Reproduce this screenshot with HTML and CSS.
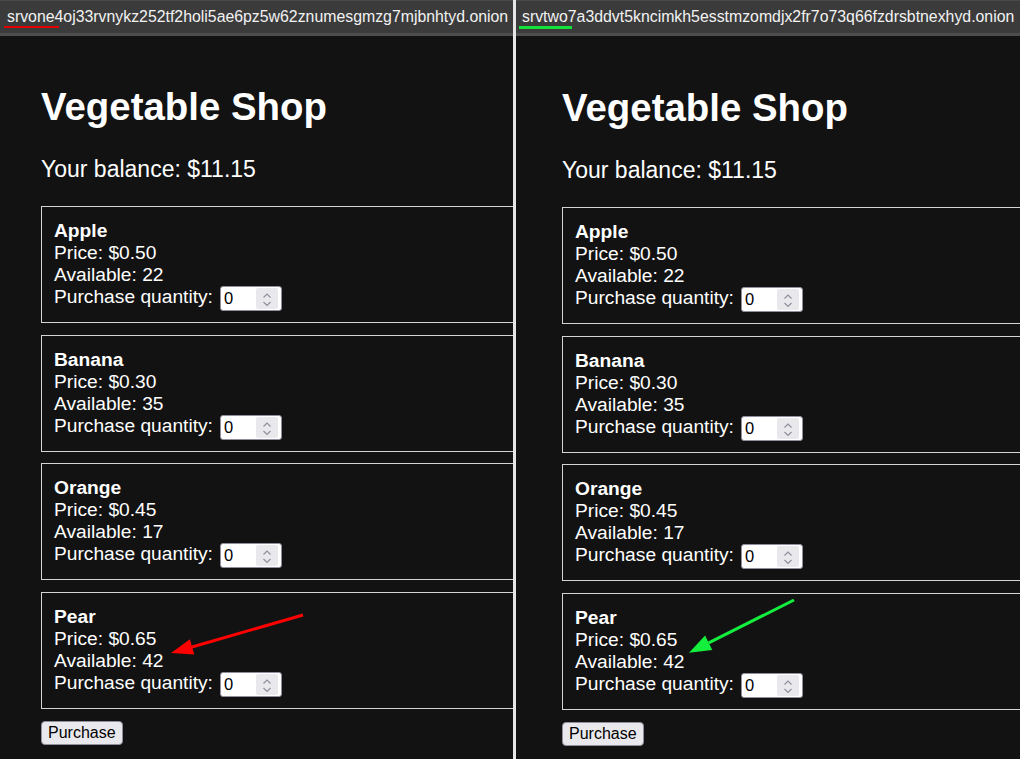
FILE: index.html
```html
<!DOCTYPE html>
<html lang="en">
<head>
    <meta charset="UTF-8">
    <meta name="viewport" content="width=device-width, initial-scale=1.0">
    <title>Vegetable Shop</title>
    <link rel="stylesheet" href="styles.css">
</head>
<body>
    <div class="screen">
        <!-- first mirror -->
        <section class="pane pane-one">
            <div class="bar"><span class="host host-red">srvone</span>4oj33rvnykz252tf2holi5ae6pz5w62znumesgmzg7mjbnhtyd.onion</div>
            <main class="page">
                <h1>Vegetable Shop</h1>
                <p class="balance">Your balance: $11.15</p>

                <div class="item">
                    <div class="name">Apple</div>
                    <div>Price: $0.50</div>
                    <div>Available: 22</div>
                    <div class="qty">Purchase quantity:<span class="num"><input type="text" value="0"><span class="spin"><svg width="22" height="21" viewBox="0 0 22 21"><path d="M7.5 9.5 L11 6 L14.5 9.5 M7.5 14 L11 17.5 L14.5 14"/></svg></span></span></div>
                </div>
                <div class="item">
                    <div class="name">Banana</div>
                    <div>Price: $0.30</div>
                    <div>Available: 35</div>
                    <div class="qty">Purchase quantity:<span class="num"><input type="text" value="0"><span class="spin"><svg width="22" height="21" viewBox="0 0 22 21"><path d="M7.5 9.5 L11 6 L14.5 9.5 M7.5 14 L11 17.5 L14.5 14"/></svg></span></span></div>
                </div>
                <div class="item">
                    <div class="name">Orange</div>
                    <div>Price: $0.45</div>
                    <div>Available: 17</div>
                    <div class="qty">Purchase quantity:<span class="num"><input type="text" value="0"><span class="spin"><svg width="22" height="21" viewBox="0 0 22 21"><path d="M7.5 9.5 L11 6 L14.5 9.5 M7.5 14 L11 17.5 L14.5 14"/></svg></span></span></div>
                </div>
                <div class="item">
                    <div class="name">Pear</div>
                    <div>Price: $0.65</div>
                    <div>Available: 42</div>
                    <div class="qty">Purchase quantity:<span class="num"><input type="text" value="0"><span class="spin"><svg width="22" height="21" viewBox="0 0 22 21"><path d="M7.5 9.5 L11 6 L14.5 9.5 M7.5 14 L11 17.5 L14.5 14"/></svg></span></span></div>
                </div>

                <button class="buy">Purchase</button>
            </main>
            <svg class="arrow" width="513" height="759" viewBox="0 0 513 759">
                <line x1="303" y1="615" x2="192" y2="647" stroke="#ff0000" stroke-width="3"/>
                <polygon points="171,653 194.3,654.6 189.9,639.2" fill="#ff0000"/>
            </svg>
        </section>

        <div class="divider"></div>

        <!-- second mirror -->
        <section class="pane pane-two">
            <div class="bar"><span class="host host-green">srvtwo</span>7a3ddvt5kncimkh5esstmzomdjx2fr7o73q66fzdrsbtnexhyd.onion</div>
            <main class="page">
                <h1>Vegetable Shop</h1>
                <p class="balance">Your balance: $11.15</p>

                <div class="item">
                    <div class="name">Apple</div>
                    <div>Price: $0.50</div>
                    <div>Available: 22</div>
                    <div class="qty">Purchase quantity:<span class="num"><input type="text" value="0"><span class="spin"><svg width="22" height="21" viewBox="0 0 22 21"><path d="M7.5 9.5 L11 6 L14.5 9.5 M7.5 14 L11 17.5 L14.5 14"/></svg></span></span></div>
                </div>
                <div class="item">
                    <div class="name">Banana</div>
                    <div>Price: $0.30</div>
                    <div>Available: 35</div>
                    <div class="qty">Purchase quantity:<span class="num"><input type="text" value="0"><span class="spin"><svg width="22" height="21" viewBox="0 0 22 21"><path d="M7.5 9.5 L11 6 L14.5 9.5 M7.5 14 L11 17.5 L14.5 14"/></svg></span></span></div>
                </div>
                <div class="item">
                    <div class="name">Orange</div>
                    <div>Price: $0.45</div>
                    <div>Available: 17</div>
                    <div class="qty">Purchase quantity:<span class="num"><input type="text" value="0"><span class="spin"><svg width="22" height="21" viewBox="0 0 22 21"><path d="M7.5 9.5 L11 6 L14.5 9.5 M7.5 14 L11 17.5 L14.5 14"/></svg></span></span></div>
                </div>
                <div class="item">
                    <div class="name">Pear</div>
                    <div>Price: $0.65</div>
                    <div>Available: 42</div>
                    <div class="qty">Purchase quantity:<span class="num"><input type="text" value="0"><span class="spin"><svg width="22" height="21" viewBox="0 0 22 21"><path d="M7.5 9.5 L11 6 L14.5 9.5 M7.5 14 L11 17.5 L14.5 14"/></svg></span></span></div>
                </div>

                <button class="buy">Purchase</button>
            </main>
            <svg class="arrow" width="504" height="759" viewBox="0 0 504 759">
                <line x1="278" y1="600" x2="192.7" y2="642.8" stroke="#14ee3c" stroke-width="3"/>
                <polygon points="173,652.7 196.3,650 189.1,635.6" fill="#14ee3c"/>
            </svg>
        </section>
    </div>
</body>
</html>
```

FILE: styles.css
```css
* {
    box-sizing: border-box;
    margin: 0;
    padding: 0;
}

html, body {
    height: 100%;
    background: #121212;
}

body {
    font-family: "Liberation Sans", Arial, sans-serif;
    color: #ffffff;
    overflow: hidden;
}

.screen {
    display: flex;
    height: 759px;
}

/* one browser window per mirror */
.pane {
    position: relative;
    overflow: hidden;
    background: #121212;
}

.pane-one {
    width: 513px;
}

.pane-two {
    flex: 1;
}

.divider {
    width: 3px;
    background: #e6e6e6;
}

/* address bar */
.bar {
    height: 36px;
    padding-left: 7px;
    background: #3b3b3b;
    border-top: 1px solid #4a4a4a;
    border-bottom: 3px solid #4e4e4e;
    font-size: 15.85px;
    line-height: 32px;
    color: #f2f2f2;
    white-space: nowrap;
}

.pane-two .bar {
    padding-left: 6px;
}

.host {
    position: relative;
}

.host::after {
    content: "";
    position: absolute;
    left: -3px;
    right: -4px;
    bottom: -3px;
    height: 2px;
    background: #e00000;
}

.host-green::after {
    background: #14e03c;
    height: 3px;
    bottom: -4px;
}

/* shop page */
.page {
    width: 640px;
    padding: 49px 0 0 41px;
    font-size: 19.2px;
}

.pane-two .page {
    padding: 50px 0 0 46px;
}

h1 {
    font-size: 38.4px;
    line-height: 44px;
    font-weight: 700;
    margin-bottom: 27px;
}

.balance {
    font-size: 23px;
    line-height: 26px;
    margin-bottom: 24px;
}

.item {
    border: 1px solid #d4d4d4;
    padding: 13px 12px 11px;
    line-height: 22px;
    margin-bottom: 11.67px;
}

.name {
    font-weight: 700;
}

.qty {
    display: flex;
    align-items: flex-start;
    height: 25px;
}

.num {
    display: inline-flex;
    align-items: center;
    width: 62px;
    height: 25px;
    margin-left: 7px;
    background: #ffffff;
    border: 1px solid #8f8f9d;
    border-radius: 3px;
}

.num input {
    width: 32px;
    border: none;
    outline: none;
    background: transparent;
    padding-left: 3px;
    font-family: "Liberation Sans", Arial, sans-serif;
    font-size: 16.5px;
    color: #000000;
}

.spin {
    display: flex;
    width: 22px;
    height: 21px;
    margin-left: auto;
    margin-right: 3px;
    background: #e9e9ed;
    border-radius: 2px;
}

.spin path {
    fill: none;
    stroke: #8f8f9d;
    stroke-width: 1.2;
}

.buy {
    margin-top: -0.67px;
    height: 24px;
    padding: 0 6px;
    background: #e9e9ed;
    border: 1px solid #8f8f9d;
    border-radius: 4px;
    font-family: "Liberation Sans", Arial, sans-serif;
    font-size: 16px;
    color: #000000;
}

/* annotation arrows drawn over the page */
.arrow {
    position: absolute;
    left: 0;
    top: 0;
    pointer-events: none;
}
```
